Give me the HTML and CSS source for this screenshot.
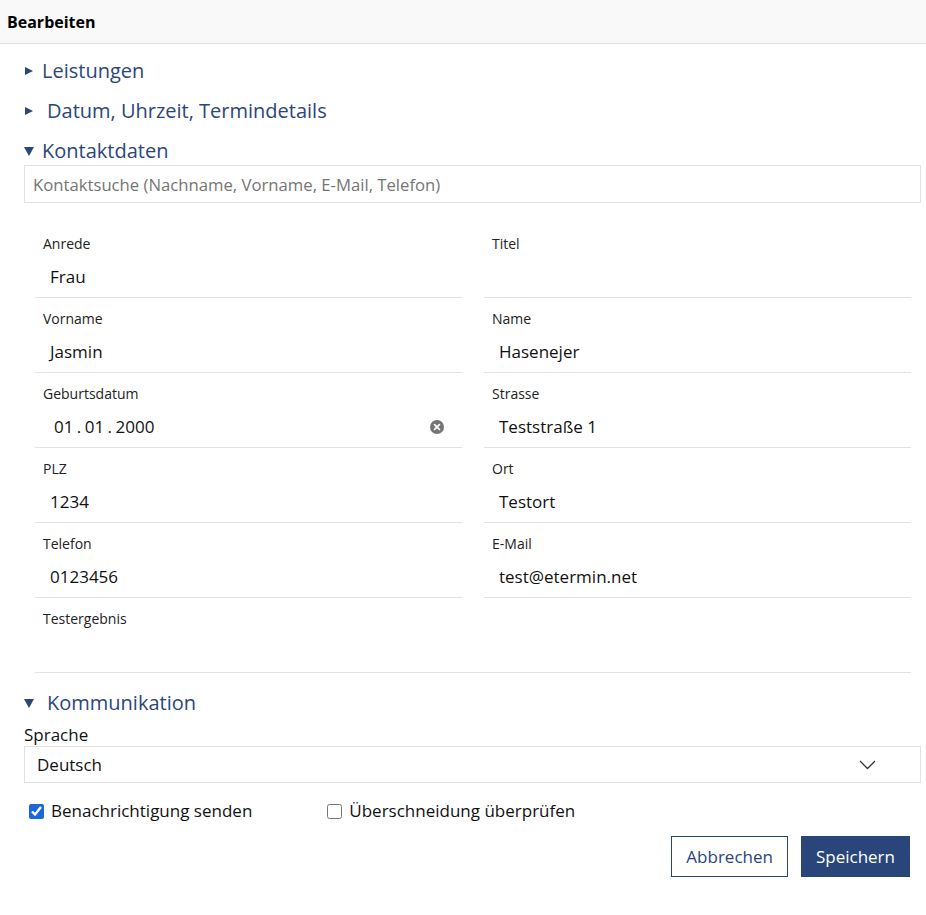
FILE: index.html
```html
<!DOCTYPE html>
<html lang="de">
<head>
  <meta charset="UTF-8">
  <meta name="viewport" content="width=device-width, initial-scale=1.0">
  <title>Bearbeiten</title>
  <link rel="stylesheet" href="styles.css">
</head>
<body>
  <header class="topbar">
    <h1>Bearbeiten</h1>
  </header>
  <main class="content">
    <div class="section-title">
      <svg class="caret" width="10" height="10" viewBox="0 0 10 10"><polygon points="1,1 9,5 1,9" /></svg>
      <span>Leistungen</span>
    </div>
    <div class="section-title">
      <svg class="caret" width="10" height="10" viewBox="0 0 10 10"><polygon points="1,1 9,5 1,9" /></svg>
      <span class="shifted">Datum, Uhrzeit, Termindetails</span>
    </div>
    <div class="section-title">
      <svg class="caret" width="10" height="10" viewBox="0 0 10 10"><polygon points="0,1 10,1 5,10" /></svg>
      <span>Kontaktdaten</span>
    </div>
    <input class="search" type="text" placeholder="Kontaktsuche (Nachname, Vorname, E-Mail, Telefon)">

    <div class="fields">
      <div class="field">
        <label>Anrede</label>
        <div class="value">Frau</div>
      </div>
      <div class="field">
        <label>Titel</label>
        <div class="value"></div>
      </div>
      <div class="field">
        <label>Vorname</label>
        <div class="value">Jasmin</div>
      </div>
      <div class="field">
        <label>Name</label>
        <div class="value">Hasenejer</div>
      </div>
      <div class="field">
        <label>Geburtsdatum</label>
        <div class="value date">
          <span>01 . 01 . 2000</span>
          <svg class="clear" width="14" height="14" viewBox="0 0 14 14">
            <circle cx="7" cy="7" r="7" fill="#757575" />
            <path d="M4.6 4.6 L9.4 9.4 M9.4 4.6 L4.6 9.4" stroke="#fff" stroke-width="1.8" stroke-linecap="round" />
          </svg>
        </div>
      </div>
      <div class="field">
        <label>Strasse</label>
        <div class="value">Teststraße 1</div>
      </div>
      <div class="field">
        <label>PLZ</label>
        <div class="value">1234</div>
      </div>
      <div class="field">
        <label>Ort</label>
        <div class="value">Testort</div>
      </div>
      <div class="field">
        <label>Telefon</label>
        <div class="value">0123456</div>
      </div>
      <div class="field">
        <label>E-Mail</label>
        <div class="value">test@etermin.net</div>
      </div>
      <div class="field wide">
        <label>Testergebnis</label>
        <div class="value"></div>
      </div>
    </div>

    <div class="section-title comm">
      <svg class="caret" width="10" height="10" viewBox="0 0 10 10"><polygon points="0,1 10,1 5,10" /></svg>
      <span class="shifted">Kommunikation</span>
    </div>
    <div class="select-label">Sprache</div>
    <div class="select">
      <span>Deutsch</span>
      <svg width="17" height="10" viewBox="0 0 17 10"><polyline points="1,1 8.5,8.5 16,1" fill="none" stroke="#333" stroke-width="1.3" /></svg>
    </div>

    <div class="checks">
      <label class="check"><input type="checkbox" checked> Benachrichtigung senden</label>
      <label class="check"><input type="checkbox"> Überschneidung überprüfen</label>
    </div>

    <div class="actions">
      <button class="btn btn-outline">Abbrechen</button>
      <button class="btn btn-primary">Speichern</button>
    </div>
  </main>
</body>
</html>
```

FILE: styles.css
```css
body {
  font-family: "Open Sans", "Noto Sans", sans-serif;
  margin: 0;
  padding: 0;
  color: #111;
  background: #fff;
}
.topbar {
  background-color: #f9f9f9;
  border-bottom: 1px solid #e2e2e2;
  height: 43px;
  display: flex;
  align-items: center;
  padding: 0 7px;
}
.topbar h1 {
  margin: 0;
  font-size: 16px;
  font-weight: 700;
  color: #000;
}
.content {
  padding: 0 5px 40px 24px;
}
.section-title {
  display: flex;
  align-items: center;
  height: 28px;
  line-height: 26px;
  margin-top: 12px;
  font-size: 20px;
  color: #2b4679;
}
.section-title:first-child {
  margin-top: 13px;
}
.caret {
  fill: #2b4679;
  margin-right: 8px;
  flex: none;
}
.shifted {
  margin-left: 5px;
}
.search {
  display: block;
  box-sizing: border-box;
  width: 100%;
  height: 38px;
  border: 1px solid #e2e2e2;
  padding: 0 8px;
  font-family: inherit;
  font-size: 16.7px;
  outline: none;
}
.search::placeholder {
  color: #757575;
}
.fields {
  display: grid;
  grid-template-columns: 1fr 1fr;
  column-gap: 22px;
  margin: 20px 10px 0 11px;
}
.field {
  border-bottom: 1px solid #e2e2e2;
  padding: 12px 0 8px;
}
.field.wide {
  grid-column: 1 / 3;
}
.field label {
  display: block;
  font-size: 14px;
  line-height: 18px;
  padding-left: 8px;
  color: #222;
}
.field .value {
  margin-top: 12px;
  height: 24px;
  line-height: 24px;
  font-size: 17px;
  padding-left: 15px;
}
.value.date {
  display: flex;
  align-items: center;
  justify-content: space-between;
  padding-left: 19px;
  padding-right: 18px;
  word-spacing: -1px;
}
.comm {
  margin-top: 16px;
}
.select-label {
  margin-top: 7px;
  font-size: 17px;
  line-height: 22px;
}
.select {
  box-sizing: border-box;
  height: 37px;
  border: 1px solid #e2e2e2;
  display: flex;
  align-items: center;
  justify-content: space-between;
  padding: 0 44px 0 12px;
  font-size: 17px;
}
.checks {
  display: flex;
  gap: 75px;
  margin-top: 16px;
  padding-left: 5px;
  font-size: 17px;
  line-height: 24px;
}
.check {
  display: flex;
  align-items: center;
  gap: 7px;
}
.check input {
  width: 15px;
  height: 15px;
  margin: 0;
  accent-color: #1a66dc;
}
.actions {
  display: flex;
  justify-content: flex-end;
  gap: 13px;
  margin-top: 13px;
  padding-right: 11px;
}
.btn {
  font-family: inherit;
  font-size: 17px;
  height: 41px;
  padding: 0 14px;
  border: 1px solid #28467a;
  cursor: pointer;
}
.btn-outline {
  background: #fff;
  color: #28467a;
}
.btn-primary {
  background: #28467a;
  color: #fff;
}
```
